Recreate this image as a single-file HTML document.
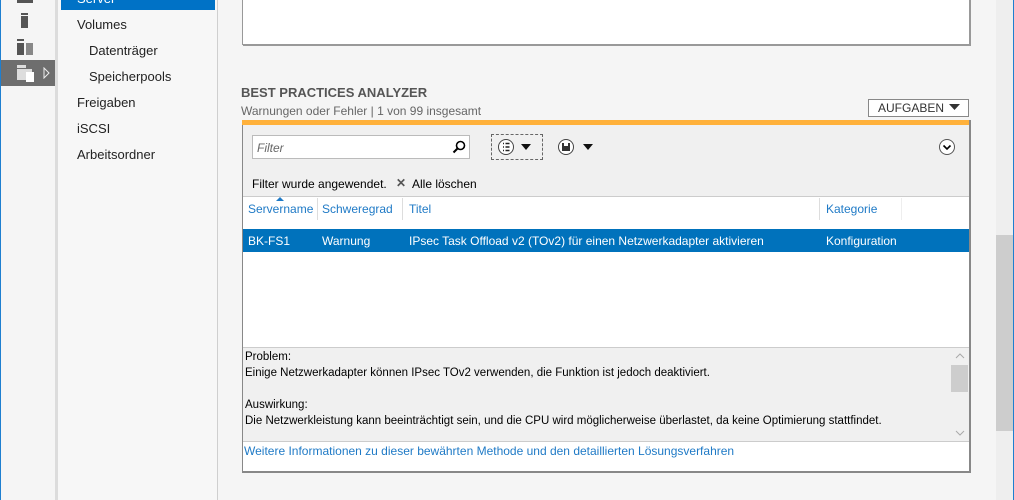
<!DOCTYPE html>
<html><head><meta charset="utf-8"><style>
*{margin:0;padding:0;box-sizing:border-box}
body{width:1014px;height:500px;overflow:hidden;background:#f5f5f5;font-family:"Segoe UI","Liberation Sans",sans-serif;font-size:12px;color:#000;position:relative}
.a{position:absolute}
.nav{font-size:13px;color:#222}
</style></head><body>
<div class="a" style="left:0;top:0;width:1px;height:500px;background:#1e7fd0"></div>
<div class="a" style="left:1013px;top:0;width:1px;height:500px;background:#1e7fd0"></div>
<div class="a" style="left:1px;top:0;width:54px;height:500px;background:#f5f5f5"></div>
<div class="a" style="left:55px;top:0;width:3px;height:500px;background:#dcdcdc"></div>
<div class="a" style="left:17px;top:0;width:16px;height:3px;background:#555"></div>
<div class="a" style="left:21px;top:13px;width:7px;height:2px;background:#555"></div>
<div class="a" style="left:21px;top:16px;width:7px;height:12px;background:#555"></div>
<div class="a" style="left:17px;top:39px;width:7px;height:2px;background:#555"></div>
<div class="a" style="left:17px;top:43px;width:7px;height:12px;background:#555"></div>
<div class="a" style="left:26px;top:43px;width:7px;height:12px;background:#888"></div>
<div class="a" style="left:1px;top:60px;width:54px;height:26px;background:#6e6e6e"></div>
<div class="a" style="left:17px;top:65px;width:9px;height:3px;background:#ddd"></div>
<div class="a" style="left:17px;top:69px;width:15px;height:11px;background:#ddd"></div>
<div class="a" style="left:26px;top:72px;width:8px;height:10px;background:#fff"></div>
<svg class="a" style="left:43px;top:67px" width="8" height="12"><path d="M1 1 L6 6 L1 11 Z" fill="none" stroke="#eee" stroke-width="1"/></svg>
<div class="a" style="left:58px;top:0;width:159px;height:500px;background:#f7f7f7"></div>
<div class="a" style="left:217px;top:0;width:1px;height:500px;background:#cfcfcf"></div>
<div class="a" style="left:61px;top:0;width:154px;height:10px;background:#0072c6;overflow:hidden"><div style="position:absolute;left:16px;top:-9px;color:#fff;font-size:13px">Server</div></div>
<div class="a nav" style="left:77px;top:17px">Volumes</div>
<div class="a nav" style="left:89px;top:43px">Datenträger</div>
<div class="a nav" style="left:89px;top:69px">Speicherpools</div>
<div class="a nav" style="left:77px;top:95px">Freigaben</div>
<div class="a nav" style="left:77px;top:121px">iSCSI</div>
<div class="a nav" style="left:77px;top:147px">Arbeitsordner</div>
<div class="a" style="left:996px;top:0;width:17px;height:500px;background:#eeeeee"></div>
<div class="a" style="left:996px;top:235px;width:17px;height:196px;background:#cdcdcd"></div>
<div class="a" style="left:242px;top:-2px;width:728px;height:47px;background:#fff;border:1px solid #999;border-width:0 1px 1px 1px;box-shadow:1px 1px 0 #999"></div>
<div class="a" style="left:241px;top:85px;font-weight:bold;font-size:13px;color:#555">BEST PRACTICES ANALYZER</div>
<div class="a" style="left:241px;top:104px;color:#666">Warnungen oder Fehler | 1 von 99 insgesamt</div>
<div class="a" style="left:868px;top:99px;width:101px;height:18px;border:1px solid #888;background:#fff;color:#333;padding-left:9px;line-height:16px">AUFGABEN</div>
<svg class="a" style="left:949px;top:104px" width="12" height="7"><path d="M0 0H11L5.5 6Z" fill="#333"/></svg>
<div class="a" style="left:242px;top:120px;width:729px;height:353px;border:1px solid #888;border-width:0 2px 2px 1px;background:#fff"></div>
<div class="a" style="left:242px;top:120px;width:727px;height:5px;background:#ffb13b"></div>
<div class="a" style="left:243px;top:125px;width:726px;height:72px;background:#f0f0f0;border-bottom:1px solid #ccc"></div>
<div class="a" style="left:252px;top:135px;width:218px;height:24px;background:#fff;border:1px solid #bbb;font-style:italic;color:#666;padding:5px 4px">Filter</div>
<svg class="a" style="left:452px;top:140px" width="14" height="14"><circle cx="8.5" cy="5.5" r="4" fill="none" stroke="#000" stroke-width="1.6"/><path d="M5.5 8.5L1.5 12.5" stroke="#000" stroke-width="2"/></svg>
<div class="a" style="left:491px;top:134px;width:52px;height:26px;border:1px dashed #666"></div>
<svg class="a" style="left:497px;top:138px" width="40" height="18"><circle cx="9" cy="9" r="7.5" fill="#fff" stroke="#444"/><path d="M6 5.5h1M6 9h1M6 12.5h1M8.5 5.5h4M8.5 9h4M8.5 12.5h4" stroke="#222" stroke-width="1.5"/><path d="M24 6h10l-5 6z" fill="#111"/></svg>
<svg class="a" style="left:557px;top:138px" width="40" height="18"><circle cx="9" cy="9" r="7.5" fill="#fff" stroke="#444"/><rect x="5" y="5" width="8" height="8" fill="#333"/><rect x="7" y="5" width="4" height="3" fill="#fff"/><path d="M26 6h10l-5 6z" fill="#111"/></svg>
<svg class="a" style="left:938px;top:138px" width="18" height="18"><circle cx="9" cy="9" r="7.5" fill="#fff" stroke="#555"/><path d="M5.5 7.5L9 11L12.5 7.5" fill="none" stroke="#000" stroke-width="1.6"/></svg>
<div class="a" style="left:252px;top:177px">Filter wurde angewendet.</div>
<div class="a" style="left:396px;top:176px;color:#555;font-weight:bold">✕</div>
<div class="a" style="left:412px;top:177px">Alle löschen</div>
<div class="a" style="left:248px;top:202px;color:#1f7ac6">Servername</div>
<svg class="a" style="left:276px;top:197px" width="8" height="5"><path d="M0 4L4 0L8 4Z" fill="#1f7ac6"/></svg>
<div class="a" style="left:317px;top:198px;width:1px;height:22px;background:#ddd"></div>
<div class="a" style="left:322px;top:202px;color:#1f7ac6">Schweregrad</div>
<div class="a" style="left:402px;top:198px;width:1px;height:22px;background:#ddd"></div>
<div class="a" style="left:409px;top:202px;color:#1f7ac6">Titel</div>
<div class="a" style="left:819px;top:198px;width:1px;height:22px;background:#ddd"></div>
<div class="a" style="left:826px;top:202px;color:#1f7ac6">Kategorie</div>
<div class="a" style="left:901px;top:198px;width:1px;height:22px;background:#eee"></div>
<div class="a" style="left:243px;top:229px;width:726px;height:23px;background:#0072bc"></div>
<div class="a" style="left:248px;top:234px;color:#fff">BK-FS1</div>
<div class="a" style="left:322px;top:234px;color:#fff">Warnung</div>
<div class="a" style="left:409px;top:234px;color:#fff">IPsec Task Offload v2 (TOv2) für einen Netzwerkadapter aktivieren</div>
<div class="a" style="left:826px;top:234px;color:#fff">Konfiguration</div>
<div class="a" style="left:243px;top:347px;width:726px;height:95px;background:#f0f0f0;border-top:1px solid #ccc;border-bottom:1px solid #ccc"></div>
<div class="a" style="left:245px;top:349px;line-height:16px;font-size:11.5px">Problem:<br>Einige Netzwerkadapter können IPsec TOv2 verwenden, die Funktion ist jedoch deaktiviert.<br><br>Auswirkung:<br>Die Netzwerkleistung kann beeinträchtigt sein, und die CPU wird möglicherweise überlastet, da keine Optimierung stattfindet.</div>
<div class="a" style="left:951px;top:365px;width:17px;height:27px;background:#cdcdcd"></div>
<svg class="a" style="left:955px;top:353px" width="10" height="6"><path d="M1 5L5 1L9 5" fill="none" stroke="#aaa"/></svg>
<svg class="a" style="left:955px;top:430px" width="10" height="6"><path d="M1 1L5 5L9 1" fill="none" stroke="#aaa"/></svg>
<div class="a" style="left:244px;top:444px;color:#1f7ac6">Weitere Informationen zu dieser bewährten Methode und den detaillierten Lösungsverfahren</div>
</body></html>
